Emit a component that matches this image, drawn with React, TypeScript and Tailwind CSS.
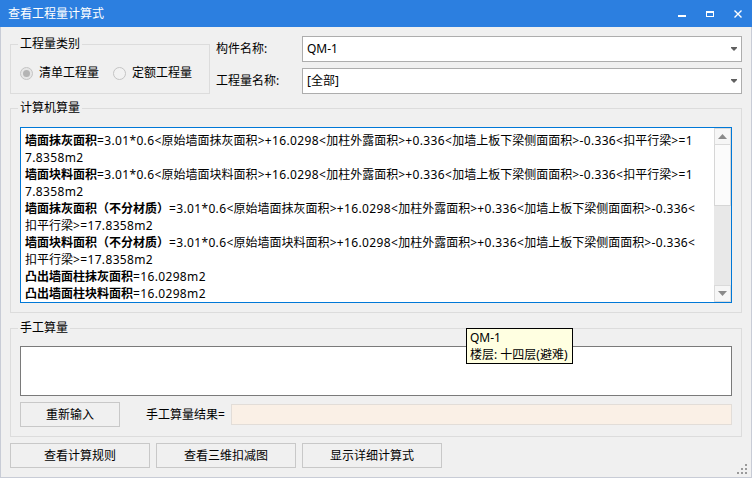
import React from 'react';

type Line = { bold?: string; text?: string };

const CALC_LINES: Line[] = [
  { bold: '墙面抹灰面积', text: '=3.01*0.6<原始墙面抹灰面积>+16.0298<加柱外露面积>+0.336<加墙上板下梁侧面面积>-0.336<扣平行梁>=1' },
  { text: '7.8358m2' },
  { bold: '墙面块料面积', text: '=3.01*0.6<原始墙面块料面积>+16.0298<加柱外露面积>+0.336<加墙上板下梁侧面面积>-0.336<扣平行梁>=1' },
  { text: '7.8358m2' },
  { bold: '墙面抹灰面积（不分材质）', text: '=3.01*0.6<原始墙面抹灰面积>+16.0298<加柱外露面积>+0.336<加墙上板下梁侧面面积>-0.336<' },
  { text: '扣平行梁>=17.8358m2' },
  { bold: '墙面块料面积（不分材质）', text: '=3.01*0.6<原始墙面块料面积>+16.0298<加柱外露面积>+0.336<加墙上板下梁侧面面积>-0.336<' },
  { text: '扣平行梁>=17.8358m2' },
  { bold: '凸出墙面柱抹灰面积', text: '=16.0298m2' },
  { bold: '凸出墙面柱块料面积', text: '=16.0298m2' },
];

// latin runs get a little extra tracking so widths come close to the YaHei original
const Runs = ({ s }: { s: string }) => (
  <>
    {s.split(/([\u3000-\u9fff\uff00-\uffef]+)/).map((part, i) =>
      /[\u3000-\u9fff\uff00-\uffef]/.test(part) ? (
        <span key={i}>{part}</span>
      ) : (
        <span key={i} className="tracking-[0.35px]">{part}</span>
      )
    )}
  </>
);

const ComboArrow = () => (
  <svg width="6" height="4" viewBox="0 0 6 4" className="shrink-0">
    <rect x="0" y="0" width="6" height="1" fill="#606060" />
    <polygon points="0,1 6,1 3,4" fill="#606060" />
  </svg>
);

const Combo = ({ value }: { value: string }) => (
  <div className="flex-1 h-[26px] bg-white border border-[#adadad] flex items-center pl-[4px] pr-[4px]">
    <span className="flex-1">{value}</span>
    <ComboArrow />
  </div>
);

const Radio = ({ checked, label }: { checked?: boolean; label: string }) => (
  <div className="flex items-center">
    <div className={`w-[13px] h-[13px] rounded-full border border-[#c4c4c4] flex items-center justify-center ${checked ? 'bg-[#e6e6e6]' : 'bg-[#f2f2f2]'}`}>
      {checked && <div className="w-[7px] h-[7px] rounded-full bg-[#b4b4b4]" />}
    </div>
    <span className="ml-[6px] leading-[16px]">{label}</span>
  </div>
);

const Btn = ({ label, w }: { label: string; w: string }) => (
  <div className={`${w} h-[25px] border border-[#c8c8c8] bg-[#f0f0f0] flex items-center justify-center`}>{label}</div>
);

const ScrollArrow = ({ up }: { up?: boolean }) => (
  <div className="h-[17px] bg-[#f6f6f6] border border-[#dadada] flex items-center justify-center">
    <svg width="9" height="5" viewBox="0 0 9 5">
      <polygon points={up ? '0,5 9,5 4.5,0' : '0,0 9,0 4.5,5'} fill="#8a8a8a" />
    </svg>
  </div>
);

export default function App() {
  return (
    <div className="relative w-[752px] h-[478px] overflow-hidden bg-[#f0f0f0] text-[12px] text-black font-['Noto_Sans','Noto_Sans_CJK_SC',sans-serif]">
      {/* title bar */}
      <div className="h-[27px] bg-[#2c7fe0] flex items-center text-white">
        <span className="pl-[8px] leading-[16px]">查看工程量计算式</span>
        <div className="ml-auto mr-[10px] flex gap-[20px]">
          <svg width="8" height="27" viewBox="0 0 8 27">
            <rect x="0" y="15" width="8" height="2" fill="#fff" />
          </svg>
          <svg width="8" height="27" viewBox="0 0 8 27">
            <rect x="0.5" y="11.5" width="7" height="5" fill="none" stroke="#fff" />
            <rect x="0" y="11" width="8" height="2" fill="#fff" />
          </svg>
          <svg width="8" height="27" viewBox="0 0 8 27">
            <path d="M0.5 10.5 L7.5 17.5 M7.5 10.5 L0.5 17.5" stroke="#fff" strokeWidth="1.4" />
          </svg>
        </div>
      </div>

      {/* body */}
      <div className="h-[451px] border-x border-b border-[#c8ccd6] px-[9px] pt-[9px] flex flex-col">
        <div className="flex">
          <fieldset className="w-[200px] border border-[#dcdcdc] pl-[7px] pt-[13px] pb-[12px]">
            <legend className="px-[2px] leading-[16px]">工程量类别</legend>
            <div className="ml-[2px] flex items-center gap-[14px] h-[16px]">
              <Radio checked label="清单工程量" />
              <Radio label="定额工程量" />
            </div>
          </fieldset>
          <div className="ml-[6px] flex-1 flex flex-col gap-[6px]">
            <div className="flex items-center">
              <span className="w-[86px]">构件名称:</span>
              <Combo value="QM-1" />
            </div>
            <div className="flex items-center">
              <span className="w-[86px]">工程量名称:</span>
              <Combo value="[全部]" />
            </div>
          </div>
        </div>

        <fieldset className="mt-[6px] border border-[#dcdcdc] pl-[7px] pr-[9px] pt-[11px] pb-[9px]">
          <legend className="px-[2px] leading-[16px]">计算机算量</legend>
          <div className="ml-[2px] h-[176px] bg-white border border-[#0078d7] flex">
            <div className="flex-1 overflow-hidden pl-[4px] pt-[4px]">
              {CALC_LINES.map((l, i) => (
                <div key={i} className="leading-[17px] whitespace-nowrap">
                  {l.bold && <span className="font-bold">{l.bold}</span>}
                  {l.text && <Runs s={l.text} />}
                </div>
              ))}
            </div>
            <div className="w-[17px] flex flex-col bg-[#e8e8e8]">
              <ScrollArrow up />
              <div className="h-[61px] bg-[#fbfbfb] border border-[#d6d6d6] border-t-0" />
              <div className="flex-1" />
              <ScrollArrow />
            </div>
          </div>
        </fieldset>

        <fieldset className="mt-[7px] border border-[#dcdcdc] pl-[7px] pr-[9px] pt-[10px] pb-[9px]">
          <legend className="px-[2px] leading-[16px]">手工算量</legend>
          <div className="ml-[2px] h-[50px] bg-white border border-[#7a7a7a]" />
          <div className="ml-[2px] mt-[6px] flex items-center h-[25px]">
            <Btn label="重新输入" w="w-[100px]" />
            <span className="ml-[26px]">手工算量结果=</span>
            <div className="ml-[6px] flex-1 h-[21px] bg-[#faf0e6] border border-[#e2ddd8]" />
          </div>
        </fieldset>

        <div className="mt-[6px] flex gap-[6px]">
          <Btn label="查看计算规则" w="w-[140px]" />
          <Btn label="查看三维扣减图" w="w-[140px]" />
          <Btn label="显示详细计算式" w="w-[140px]" />
        </div>
      </div>

      {/* tooltip */}
      <div className="absolute left-[466px] top-[328px] w-[107px] h-[36px] bg-[#ffffe1] border border-black pl-[3px]">
        <div className="leading-[17px]">QM-1</div>
        <div className="leading-[17px]">楼层: 十四层(避难)</div>
      </div>

      {/* size grip */}
      <svg className="absolute right-[5px] bottom-[4px]" width="10" height="10" viewBox="0 0 10 10">
        <rect x="8" y="0" width="2" height="2" fill="#9a9a9a" />
        <rect x="4" y="4" width="2" height="2" fill="#9a9a9a" />
        <rect x="8" y="4" width="2" height="2" fill="#9a9a9a" />
        <rect x="0" y="8" width="2" height="2" fill="#9a9a9a" />
        <rect x="4" y="8" width="2" height="2" fill="#9a9a9a" />
        <rect x="8" y="8" width="2" height="2" fill="#9a9a9a" />
      </svg>
    </div>
  );
}
